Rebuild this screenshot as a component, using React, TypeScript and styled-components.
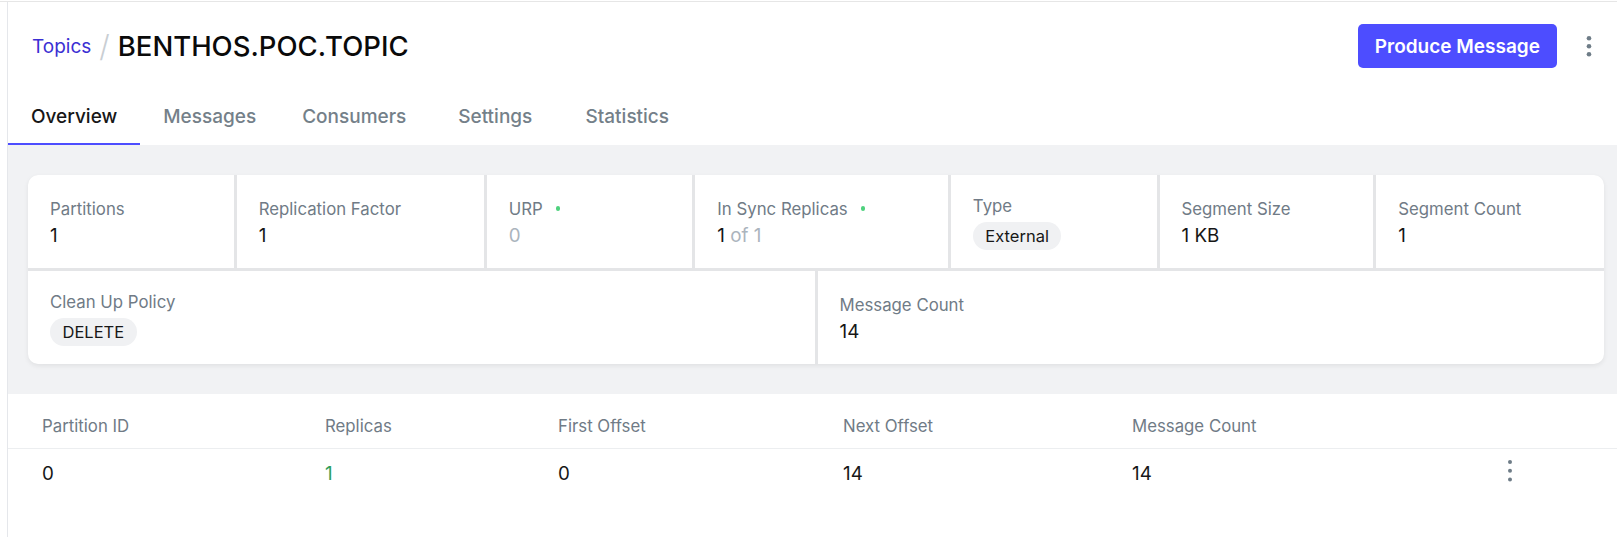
import React from "react";
import styled, { createGlobalStyle, css } from "styled-components";

const GlobalStyle = createGlobalStyle`
  html, body { margin: 0; padding: 0; background: #ffffff; }
  body {
    font-family: Inter, "Noto Sans", "Liberation Sans", sans-serif;
    color: #171717;
    -webkit-font-smoothing: antialiased;
  }
  * { box-sizing: border-box; }
`;

const Shell = styled.div`
  margin-top: 1px;
  border-top: 1px solid #e6e6e6;
`;

const Main = styled.main`
  margin-left: 7px;
  border-left: 1px solid #e5e7eb;
  min-height: 535px;
  background: #ffffff;
`;

const Header = styled.header`
  background: #ffffff;
  padding-top: 22px;
`;

const TitleRow = styled.div`
  display: flex;
  align-items: center;
  justify-content: space-between;
  height: 44px;
  padding: 0 16px 0 24px;
`;

const Breadcrumb = styled.div`
  display: flex;
  align-items: center;
  gap: 8px;
`;

const Crumb = styled.a`
  font-size: 19px;
  line-height: 27px;
  color: #3b2fd3;
  text-decoration: none;
  cursor: pointer;
`;

const Slash = styled.span`
  font-size: 30px;
  line-height: 36px;
  font-weight: 300;
  color: #c9ced3;
`;

const Title = styled.h1`
  margin: 0;
  font-size: 27.5px;
  line-height: 36px;
  font-weight: 500;
  color: #0a0a0a;
`;

const Actions = styled.div`
  display: flex;
  align-items: center;
  gap: 20px;
`;

const PrimaryButton = styled.button`
  height: 44px;
  padding: 0 17px;
  border: none;
  border-radius: 5px;
  background: #4d4dff;
  color: #ffffff;
  font-family: inherit;
  font-size: 19px;
  font-weight: 600;
  cursor: pointer;
`;

const IconButton = styled.button<{ $offset?: number }>`
  display: flex;
  align-items: center;
  justify-content: center;
  width: 24px;
  height: 30px;
  padding: 0;
  border: none;
  background: transparent;
  color: #6e7c87;
  cursor: pointer;
  ${(p) => p.$offset && css`margin-top: ${p.$offset}px;`}
`;

const Tabs = styled.nav`
  display: flex;
  margin-top: 23px;
`;

const Tab = styled.a<{ $active?: boolean }>`
  min-width: 132px;
  padding: 12px 23px 13px;
  text-align: center;
  font-size: 19px;
  line-height: 27px;
  font-weight: 500;
  color: ${(p) => (p.$active ? "#171717" : "#748089")};
  border-bottom: 2px solid ${(p) => (p.$active ? "#4d4dff" : "transparent")};
  cursor: pointer;
`;

const Section = styled.section`
  background: #f1f2f4;
  padding: 30px 13px 30px 20px;
`;

const Card = styled.div`
  display: flex;
  flex-direction: column;
  gap: 3px;
  background: #e4e5e7;
  border-radius: 10px;
  overflow: hidden;
  box-shadow: 0 2px 5px rgba(0, 0, 0, 0.07);
`;

const StatRow = styled.div`
  display: flex;
  gap: 3px;
`;

const Stat = styled.div<{ $even?: boolean }>`
  flex: ${(p) => (p.$even ? "1 1 0" : "1 1 auto")};
  display: flex;
  flex-direction: column;
  justify-content: center;
  gap: 4px;
  padding: 18.5px 22px;
  background: #ffffff;
`;

const Label = styled.div`
  display: flex;
  align-items: center;
  gap: 13px;
  min-width: 101px;
  font-size: 16.8px;
  line-height: 24px;
  color: #707b86;
  white-space: nowrap;
`;

const Dot = styled.span`
  width: 4.5px;
  height: 4.5px;
  border-radius: 50%;
  background: #4fd17e;
`;

const Value = styled.div<{ $muted?: boolean }>`
  font-size: 18.8px;
  line-height: 22px;
  color: ${(p) => (p.$muted ? "#abb4bd" : "#171717")};
  white-space: nowrap;
`;

const Muted = styled.span`
  color: #abb4bd;
`;

const Badge = styled.span`
  align-self: flex-start;
  display: inline-flex;
  align-items: center;
  height: 28px;
  padding: 0 12.5px;
  border-radius: 14px;
  background: #f0f1f3;
  font-size: 16.5px;
  color: #171717;
`;

const Table = styled.div`
  background: #ffffff;
`;

const TRow = styled.div<{ $head?: boolean }>`
  display: grid;
  grid-template-columns: 283px 233px 285px 289px 1fr 119px;
  align-items: center;
  padding-left: 34px;
  ${(p) =>
    p.$head
      ? css`
          padding-top: 20px;
          padding-bottom: 10px;
          border-bottom: 1px solid #eceef0;
          font-size: 16.8px;
          line-height: 24px;
          color: #707b86;
        `
      : css`
          padding-top: 12px;
          font-size: 18.8px;
          line-height: 26px;
          color: #171717;
        `}
`;

const TCell = styled.div<{ $green?: boolean }>`
  color: ${(p) => (p.$green ? "#2f9e5b" : "inherit")};
`;

const Kebab = ({ r = 2.2, gap = 8 }: { r?: number; gap?: number }) => {
  const h = gap * 2 + r * 2 + 2;
  const cy = h / 2;
  return (
    <svg width="10" height={h} viewBox={`0 0 10 ${h}`} fill="currentColor" aria-hidden="true">
      <circle cx="5" cy={cy - gap} r={r} />
      <circle cx="5" cy={cy} r={r} />
      <circle cx="5" cy={cy + gap} r={r} />
    </svg>
  );
};

const topStats = [
  { label: "Partitions", value: <Value>1</Value> },
  { label: "Replication Factor", value: <Value>1</Value> },
  { label: "URP", dot: true, value: <Value $muted>0</Value> },
  {
    label: "In Sync Replicas",
    dot: true,
    value: (
      <Value>
        1 <Muted>of 1</Muted>
      </Value>
    ),
  },
  { label: "Type", value: <Badge>External</Badge> },
  { label: "Segment Size", value: <Value>1 KB</Value> },
  { label: "Segment Count", value: <Value>1</Value> },
];

export default function App() {
  return (
    <>
      <GlobalStyle />
      <Shell>
        <Main>
          <Header>
            <TitleRow>
              <Breadcrumb>
                <Crumb>Topics</Crumb>
                <Slash>/</Slash>
                <Title>BENTHOS.POC.TOPIC</Title>
              </Breadcrumb>
              <Actions>
                <PrimaryButton>Produce Message</PrimaryButton>
                <IconButton aria-label="More">
                  <Kebab r={2.3} gap={8} />
                </IconButton>
              </Actions>
            </TitleRow>
            <Tabs>
              <Tab $active>Overview</Tab>
              <Tab>Messages</Tab>
              <Tab>Consumers</Tab>
              <Tab>Settings</Tab>
              <Tab>Statistics</Tab>
            </Tabs>
          </Header>

          <Section>
            <Card>
              <StatRow>
                {topStats.map((s) => (
                  <Stat key={s.label}>
                    <Label>
                      {s.label}
                      {s.dot && <Dot />}
                    </Label>
                    {s.value}
                  </Stat>
                ))}
              </StatRow>
              <StatRow>
                <Stat $even>
                  <Label>Clean Up Policy</Label>
                  <Badge>DELETE</Badge>
                </Stat>
                <Stat $even>
                  <Label>Message Count</Label>
                  <Value>14</Value>
                </Stat>
              </StatRow>
            </Card>
          </Section>

          <Table>
            <TRow $head>
              <TCell>Partition ID</TCell>
              <TCell>Replicas</TCell>
              <TCell>First Offset</TCell>
              <TCell>Next Offset</TCell>
              <TCell>Message Count</TCell>
              <TCell />
            </TRow>
            <TRow>
              <TCell>0</TCell>
              <TCell $green>1</TCell>
              <TCell>0</TCell>
              <TCell>14</TCell>
              <TCell>14</TCell>
              <TCell>
                <IconButton aria-label="Partition actions" $offset={-7}>
                  <Kebab r={2} gap={8.7} />
                </IconButton>
              </TCell>
            </TRow>
          </Table>
        </Main>
      </Shell>
    </>
  );
}
